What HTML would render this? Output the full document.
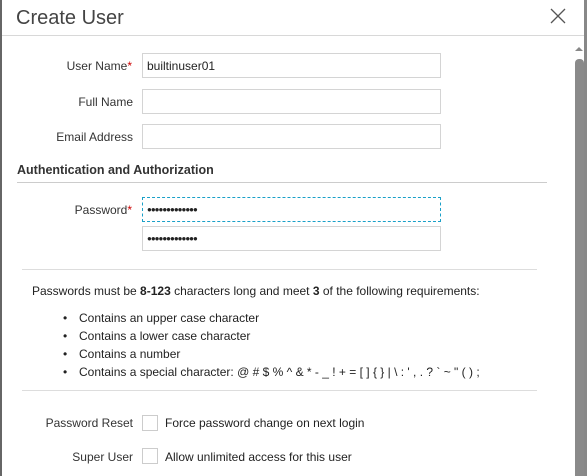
<!DOCTYPE html><html><head><style>
body{margin:0;width:587px;height:476px;overflow:hidden;background:#fff;font-family:"Liberation Sans",sans-serif;font-size:12px;color:#222;position:relative}
.a{position:absolute}
.inp{position:absolute;left:142px;width:297px;height:23px;border:1px solid #d4d4d4;background:#fff}
.lbl{position:absolute;right:455px;text-align:right;white-space:nowrap;color:#333}
.star{color:#c00}
.cb{position:absolute;left:142px;width:14px;height:14px;border:1px solid #ccc}
.hr{position:absolute;height:1px;background:#ddd}
.dots{position:absolute;left:4px;top:6px;font-size:8px;letter-spacing:-1px;line-height:12px}
</style></head><body>
<div class="a" style="left:0;top:0;width:2px;height:476px;background:#666"></div>
<div class="a" style="left:584px;top:0;width:3px;height:476px;background:#888"></div>
<div class="a" style="left:16px;top:7px;font-size:20px;color:#444;font-weight:300">Create User</div>
<svg class="a" style="left:550px;top:8px" width="16" height="16"><path d="M1 1L15 15M15 1L1 15" stroke="#555" stroke-width="1.3"/></svg>
<div class="hr" style="left:2px;top:35px;width:582px;background:#d8d8d8"></div>
<svg class="a" style="left:574px;top:45px" width="10" height="8"><path d="M1 6L5 2L9 6Z" fill="#888"/></svg>
<div class="a" style="left:575px;top:59px;width:9px;height:417px;background:#8a8a8a;border-radius:4px 4px 0 0"></div>

<div class="lbl" style="top:59px">User Name<span class="star">*</span></div>
<div class="inp" style="top:53px"><span style="position:absolute;left:4px;top:5px">builtinuser01</span></div>
<div class="lbl" style="top:95px;right:454px">Full Name</div>
<div class="inp" style="top:89px"></div>
<div class="lbl" style="top:130px;right:454px">Email Address</div>
<div class="inp" style="top:124px"></div>

<div class="a" style="left:17px;top:163px;font-weight:bold;font-size:12.5px;color:#333">Authentication and Authorization</div>
<div class="hr" style="left:17px;top:182px;width:530px;background:#ccc"></div>

<div class="lbl" style="top:203px">Password<span class="star">*</span></div>
<div class="inp" style="top:197px;border:1px dashed #1aa0c8"><span class="dots">●●●●●●●●●●●●●</span></div>
<div class="inp" style="top:226px"><span class="dots">●●●●●●●●●●●●●</span></div>

<div class="hr" style="left:22px;top:269px;width:515px"></div>
<div class="a" style="left:32px;top:284px">Passwords must be <b>8-123</b> characters long and meet <b>3</b> of the following requirements:</div>
<div class="a" style="left:63px;top:309px;line-height:18px">•<br>•<br>•<br>•</div>
<div class="a" style="left:79px;top:309px;line-height:18px;white-space:nowrap">Contains an upper case character<br>Contains a lower case character<br>Contains a number<br>Contains a special character: @ # $ % ^ &amp; * - _ ! + = [ ] { } | \ : ' , . ? ` ~ " ( ) ;</div>
<div class="hr" style="left:22px;top:390px;width:515px"></div>

<div class="lbl" style="top:416px;right:454px">Password Reset</div>
<div class="cb" style="top:415px"></div>
<div class="a" style="left:165px;top:416px">Force password change on next login</div>
<div class="lbl" style="top:450px;right:454px">Super User</div>
<div class="cb" style="top:448px"></div>
<div class="a" style="left:165px;top:450px">Allow unlimited access for this user</div>
</body></html>
